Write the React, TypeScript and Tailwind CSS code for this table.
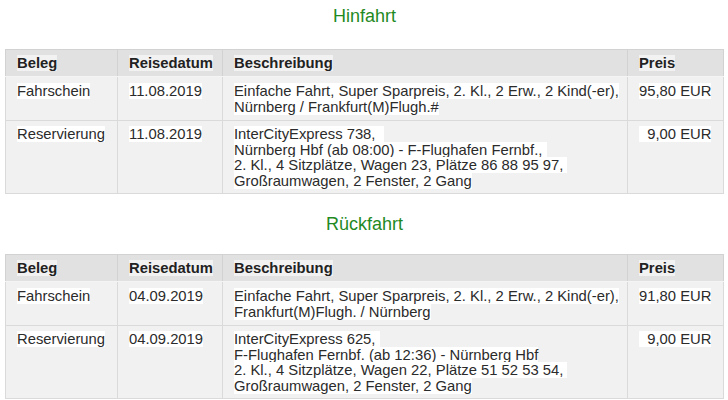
const trips = [
  {
    title: 'Hinfahrt',
    rows: [
      {
        beleg: 'Fahrschein',
        datum: '11.08.2019',
        lines: ['Einfache Fahrt, Super Sparpreis, 2. Kl., 2 Erw., 2 Kind(-er),', 'Nürnberg / Frankfurt(M)Flugh.#'],
        preis: '95,80 EUR',
      },
      {
        beleg: 'Reservierung',
        datum: '11.08.2019',
        lines: [
          'InterCityExpress 738,\u00a0\u00a0',
          'Nürnberg Hbf (ab 08:00) - F-Flughafen Fernbf.,\u00a0',
          '2. Kl., 4 Sitzplätze, Wagen 23, Plätze 86 88 95 97,\u00a0',
          'Großraumwagen, 2 Fenster, 2 Gang',
        ],
        preis: '\u00a0\u00a09,00 EUR',
      },
    ],
  },
  {
    title: 'Rückfahrt',
    rows: [
      {
        beleg: 'Fahrschein',
        datum: '04.09.2019',
        lines: ['Einfache Fahrt, Super Sparpreis, 2. Kl., 2 Erw., 2 Kind(-er),', 'Frankfurt(M)Flugh. / Nürnberg'],
        preis: '91,80 EUR',
      },
      {
        beleg: 'Reservierung',
        datum: '04.09.2019',
        lines: [
          'InterCityExpress 625,\u00a0',
          'F-Flughafen Fernbf. (ab 12:36) - Nürnberg Hbf',
          '2. Kl., 4 Sitzplätze, Wagen 22, Plätze 51 52 53 54,\u00a0',
          'Großraumwagen, 2 Fenster, 2 Gang',
        ],
        preis: '\u00a0\u00a09,00 EUR',
      },
    ],
  },
];

const Hl = ({ children }: { children: React.ReactNode }) => (
  <span className="bg-white whitespace-pre">{children}</span>
);

const App = () => {
  return (
    <div className="w-[728px] h-[400px] overflow-hidden bg-white pl-[5px] pr-[4px] font-['Liberation_Sans',Arial,sans-serif] text-[14.8px] text-[#2b2b2b]">
      {trips.map((trip, i) => (
        <div key={trip.title} className={i === 0 ? '' : 'mt-[14px]'}>
          {/* Titel */}
          <h2 className={`h-[32px] leading-[32px] text-center text-[18px] text-[#1f8a1f] ${i === 0 ? 'mb-[17px]' : 'mb-[14px]'}`}>
            {trip.title}
          </h2>

          <table className="w-full table-fixed border-collapse border border-[#dadada]">
            <colgroup>
              <col className="w-[112px]" />
              <col className="w-[105px]" />
              <col className="w-[405px]" />
              <col />
            </colgroup>
            <thead>
              <tr className="bg-[#e1e1e1] text-left">
                {['Beleg', 'Reisedatum', 'Beschreibung', 'Preis'].map((h) => (
                  <th key={h} className="border border-[#d2d2d2] border-b-[#f4f4f4] px-[11px] py-[5px] leading-[16px] font-bold text-[#222]">
                    <span className="bg-[#f2f2f2]">{h}</span>
                  </th>
                ))}
              </tr>
            </thead>
            <tbody>
              {trip.rows.map((row, r) => {
                const pad = r === 0 ? 'pt-[7px] pb-[5px]' : 'pt-[6px] pb-[4px]';
                return (
                  <tr key={row.beleg} className="bg-[#f1f1f1] align-top">
                    <td className={`border border-[#dadada] px-[11px] leading-[15.5px] ${pad}`}>
                      <Hl>{row.beleg}</Hl>
                    </td>
                    <td className={`border border-[#dadada] px-[11px] leading-[15.5px] ${pad}`}>
                      <Hl>{row.datum}</Hl>
                    </td>
                    <td className={`border border-[#dadada] px-[11px] leading-[15.5px] ${pad}`}>
                      {row.lines.map((line, j) => (
                        <span key={j}>
                          <Hl>{line}</Hl>
                          {j < row.lines.length - 1 && <br />}
                        </span>
                      ))}
                    </td>
                    <td className={`border border-[#dadada] px-[11px] leading-[15.5px] ${pad}`}>
                      <Hl>{row.preis}</Hl>
                    </td>
                  </tr>
                );
              })}
            </tbody>
          </table>
        </div>
      ))}
    </div>
  );
};

export default App;
